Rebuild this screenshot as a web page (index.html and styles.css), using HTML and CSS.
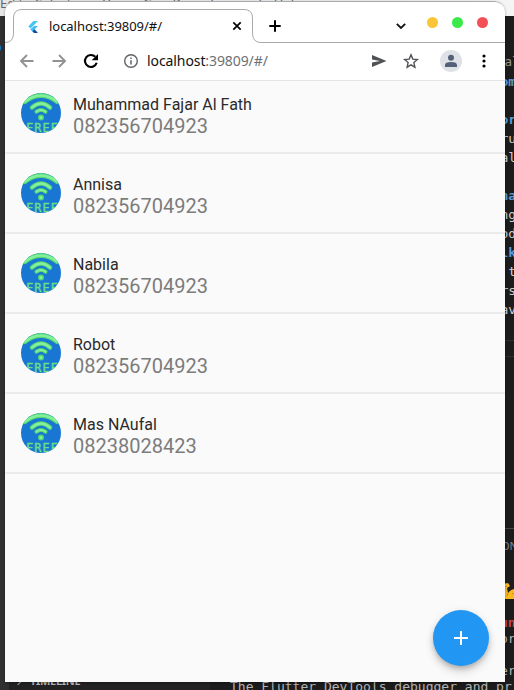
FILE: index.html
```html
<!DOCTYPE html>
<html lang="en">
<head>
<meta charset="utf-8">
<title>localhost:39809/#/</title>
<link rel="stylesheet" href="styles.css">
</head>
<body>
<svg class="defs" width="0" height="0" aria-hidden="true">
  <symbol id="wifi" viewBox="0 0 40 40">
    <rect width="40" height="40" fill="#1976d2"/>
    <g fill="none" stroke-linecap="round">
      <path d="M4 8.500Q20-3.500 36 8.500" stroke="#4fd675" stroke-width="5"/>
      <path d="M4 8.500Q20-3.500 36 8.500" stroke="#86ef9c" stroke-width="2.500"/>
      <path d="M11 14.500Q20 6.500 29 14.500" stroke="#4fd675" stroke-width="4.500"/>
      <path d="M11 14.500Q20 6.500 29 14.500" stroke="#86ef9c" stroke-width="2.300"/>
      <path d="M15.500 18.700Q20 15.300 24.500 18.700" stroke="#4fd675" stroke-width="4"/>
      <path d="M15.500 18.700Q20 15.300 24.500 18.700" stroke="#86ef9c" stroke-width="2"/>
    </g>
    <circle cx="20" cy="24.500" r="3" fill="#4fd675"/><circle cx="20" cy="24.500" r="1.500" fill="#86ef9c"/>
    <text class="free" x="5" y="39" textLength="32" lengthAdjust="spacing">FREE</text>
  </symbol>
</svg>
<div class="desktop">
  <div class="editor-menu"><span>Edit</span><span>Selection</span><span>View</span><span>Go</span><span>Run</span><span>Terminal</span><span>Help</span></div>
  <div class="activity"></div>
  <div class="badge"></div>
  <div class="sidebar"><i></i><b>TIMELINE</b></div>
  <div class="code">
    <div class="crumb">al</div>
    <div class="kw">om</div><div></div><div class="kw">or</div><div>ru</div><div>al</div><div></div><div class="kw">na</div><div>ng</div><div>od</div><div class="kw">lk</div><div> t</div><div>rs</div><div>av</div>
  </div>
  <div class="rule r1"></div><div class="rule r2"></div><div class="rule r3"></div>
  <div class="panel-tab">ON</div>
  <svg class="arm" viewBox="0 0 18 18"><path d="M0 2l5-1 2 3-3 2 1 5c4-5 9-5 13-2v8H0z" fill="#fbb91e"/><path d="M1 5l3-1M5 11l-1 3M9 12q3-2 5 1" fill="none" stroke="#d88912"/></svg>
  <div class="console"><div class="err">un</div><div>or</div><div></div><div>er</div></div>
  <div class="last">The Flutter DevTools debugger and pr</div>

  <div class="window">
    <header class="tabs">
      <svg class="outline" viewBox="0 0 500 42" fill="none" stroke="#a9a9a9"><path d="M0 41.500Q8.500 41.500 8.500 32V17Q8.500 8.500 17 8.500H239Q247.500 8.500 247.500 17V32Q247.500 41.500 256 41.500H500"/></svg>
      <svg class="flutter" viewBox="0 0 14 14"><path d="M7.500 1H12L4.500 8.500 2.300 6.300z" fill="#45c5f6"/><path d="M8 6H12L8.500 9.500 6.500 11.500 4.300 9.500z" fill="#41bdf2"/><path d="M6.300 11.300l2.200-2L12 13H8z" fill="#0b4f9f"/></svg>
      <span class="title">localhost:39809/#/</span>
      <svg class="close" viewBox="0 0 10 10"><path d="M1.300 1.300l7.400 7.400M8.700 1.300L1.300 8.700"/></svg>
      <svg class="new" viewBox="0 0 12 12"><path d="M6 .3v11.400M.3 6h11.400"/></svg>
      <svg class="chev" viewBox="0 0 10 6"><path d="M.8.800L5 5 9.200.8"/></svg>
      <div class="lights"><i class="y"></i><i class="g"></i><i class="r"></i></div>
    </header>
    <nav class="bar">
      <svg class="i back" viewBox="0 0 16 16"><path d="M14.500 8H2.500M8 2L2 8l6 6" stroke="#929292" stroke-width="1.900"/></svg>
      <svg class="i fwd" viewBox="0 0 16 16"><path d="M1.500 8H13.500M8 2l6 6-6 6" stroke="#929292" stroke-width="1.900"/></svg>
      <svg class="i reload" viewBox="0 0 16 16"><path d="M13.700 9.800A6 6 0 1 1 12.300 3.800" stroke="#000" stroke-width="2.100"/><path d="M15 1V7.300H8.700z" fill="#000"/></svg>
      <svg class="i info" viewBox="0 0 16 16"><circle cx="8" cy="8" r="6.300" stroke="#5f6368" stroke-width="1.400"/><path d="M8 7.200v4.200M8 4.400v1.500" stroke="#5f6368" stroke-width="1.500"/></svg>
      <span class="url">localhost<em>:39809/#/</em></span>
      <svg class="i send" viewBox="0 0 16 16"><path d="M1 2l14.500 6L1 14V9.500L9 8 1 6.500z" fill="#505256"/></svg>
      <svg class="i star" viewBox="0 0 16 16"><path d="M8 1.800l1.800 4.300 4.600.4-3.500 3.100 1 4.600L8 11.800l-3.900 2.400 1-4.600-3.500-3.100 4.600-.4z" stroke="#505256" stroke-width="1.400"/></svg>
      <svg class="user" viewBox="0 0 22 22"><circle cx="11" cy="11" r="11" fill="#dee1e6"/><circle cx="11" cy="7.800" r="3" fill="#546078"/><path d="M5 17v-2q0-3 6-3t6 3v2z" fill="#546078"/></svg>
      <svg class="dots" viewBox="0 0 4 14"><path d="M2 2h0M2 7h0M2 12h0"/></svg>
    </nav>
    <main>
      <ul>
        <li><svg class="avatar"><use href="#wifi"/></svg><div><h2>Muhammad Fajar Al Fath</h2><p>082356704923</p></div></li>
        <li><svg class="avatar"><use href="#wifi"/></svg><div><h2>Annisa</h2><p>082356704923</p></div></li>
        <li><svg class="avatar"><use href="#wifi"/></svg><div><h2>Nabila</h2><p>082356704923</p></div></li>
        <li><svg class="avatar"><use href="#wifi"/></svg><div><h2>Robot</h2><p>082356704923</p></div></li>
        <li><svg class="avatar"><use href="#wifi"/></svg><div><h2>Mas NAufal</h2><p>08238028423</p></div></li>
      </ul>
      <button class="fab" aria-label="Add"><svg viewBox="0 0 14 14"><path d="M7 0v14M0 7h14"/></svg></button>
    </main>
  </div>
</div>
</body>
</html>
```
FILE: styles.css
```css
* { box-sizing: border-box; margin: 0; padding: 0; }
svg { display: block; flex: none; }
.defs { position: absolute; }
.desktop { position: relative; width: 514px; height: 690px; overflow: hidden; background: #1c1c1c; }

/* editor behind the browser window */
.editor-menu { display: flex; gap: 12px; height: 16px; background: linear-gradient(90deg, #e6e6e6, #f5f5f5); color: #666; font: 13px/15px "Noto Sans", sans-serif; white-space: pre; }
.editor-menu span { position: relative; top: -4px; }
.activity { position: absolute; left: 0; top: 16px; width: 9px; height: 674px; background: #303030; }
.badge { position: absolute; left: -7px; top: 44px; width: 8px; height: 8px; border-radius: 50%; background: #0a7acc; }
.sidebar { position: absolute; left: 9px; top: 674px; width: 201px; height: 16px; display: flex; gap: 9px; padding-left: 6px; background: #222; color: #bbb; font: 11px/14px "Noto Sans", sans-serif; letter-spacing: -.3px; }
.sidebar i { width: 6px; height: 6px; margin-top: 4px; border: solid #aaa; border-width: 1px 1px 0 0; transform: rotate(45deg); }
.code { position: absolute; left: 500.500px; top: 52px; color: #d0d0d0; font: 13px/19px "DejaVu Sans Mono", monospace; }
.code div { height: 19px; white-space: pre; }
.code .crumb { height: 20px; color: #999; font-size: 12.500px; padding-left: 4px; }
.code .kw { color: #569cd6; font-weight: bold; }
.rule { position: absolute; left: 505px; width: 9px; height: 1px; background: #303030; }
.r1 { top: 340px; }
.r2 { top: 356px; }
.r3 { top: 528px; background: #444; }
.panel-tab { position: absolute; left: 501px; top: 538px; color: #888; font: 11px/16px "Noto Sans", sans-serif; }
.arm { position: absolute; left: 503px; top: 582px; width: 18px; height: 18px; }
.console { position: absolute; left: 500px; top: 615px; color: #b5b5b5; font: 13px/16px "DejaVu Sans Mono", monospace; }
.console div { height: 16px; }
.console .err { color: #cd3f3f; font-weight: bold; }
.last { position: absolute; left: 230px; top: 679px; color: #b5b5b5; font: 13px/16px "DejaVu Sans Mono", monospace; white-space: nowrap; }

/* browser window */
.window { position: absolute; left: 5px; top: 1px; width: 500px; height: 681px; border-radius: 10px 10px 0 0; overflow: hidden; background: #fff; box-shadow: 0 1px 3px #0005; }
.tabs { position: relative; display: flex; align-items: center; height: 42px; padding: 8px 17px 0 21px; border-top: 1px solid #aaa; border-radius: 10px 10px 0 0; }
.outline { position: absolute; left: 0; top: -1px; width: 500px; height: 42px; }
.flutter { width: 14px; height: 14px; }
.title { width: 112px; margin: -2px 0 0 9px; color: #111; font: 13px/18px "Noto Sans", sans-serif; letter-spacing: -.04px; white-space: nowrap; }
.close { width: 10px; height: 10px; margin: -1px 0 0 71px; fill: none; stroke: #000; stroke-width: 1.700; }
.new { width: 12px; height: 12px; margin: -1px 0 0 27px; stroke: #000; stroke-width: 2; }
.chev { width: 10px; height: 6px; margin: -1px 0 0 115px; fill: none; stroke: #111; stroke-width: 1.800; }
.lights { display: flex; gap: 14px; margin: -8px 0 0 auto; }
.lights i { width: 11px; height: 11px; border-radius: 50%; }
.y { background: #fac536; }
.g { background: #39ea49; }
.r { background: #f25056; }
.bar { display: flex; align-items: center; height: 38px; padding: 0 19px 2px 14px; border-bottom: 1px solid #e3e3e3; }
.i { width: 16px; height: 16px; fill: none; }
.fwd, .reload { margin-left: 16px; }
.info { margin-left: 24px; }
.url { width: 122px; margin-left: 8px; color: #111; font: 14px/20px "Noto Sans", sans-serif; letter-spacing: -.090px; white-space: nowrap; }
.url em { color: #6d7175; font-style: normal; }
.send { margin-left: 102px; }
.star { margin-left: 16px; }
.user { width: 22px; height: 22px; margin-left: 21px; }
.dots { width: 4px; height: 14px; margin-left: auto; stroke: #000; stroke-width: 3.200; stroke-linecap: round; }

/* contact list */
main { position: relative; height: 601px; overflow: hidden; background: #fafafa; font-family: Roboto, sans-serif; }
ul { margin-top: -7px; list-style: none; }
li { display: flex; gap: 12px; height: 80px; padding: 19px 16px 0; border-bottom: 2px solid #ebebeb; }
.avatar { width: 40px; height: 40px; border-radius: 50%; }
.free { fill: #69df86; stroke: #69df86; stroke-width: .4px; font: 12px "DejaVu Sans Mono", monospace; }
h2 { padding-top: 2px; color: #2a2a2a; font-weight: 400; font-size: 16px; line-height: 20px; }
p { margin-top: -1px; color: #7c7c7c; font-size: 20px; line-height: 24px; }
.fab { position: absolute; right: 16px; bottom: 16px; display: grid; place-items: center; width: 56px; height: 56px; border: 0; border-radius: 50%; background: #2196f3; box-shadow: 0 3px 5px -1px #0003, 0 6px 10px #0002, 0 1px 10px #0001; }
.fab svg { width: 14px; height: 14px; stroke: #fff; stroke-width: 2; }
```
